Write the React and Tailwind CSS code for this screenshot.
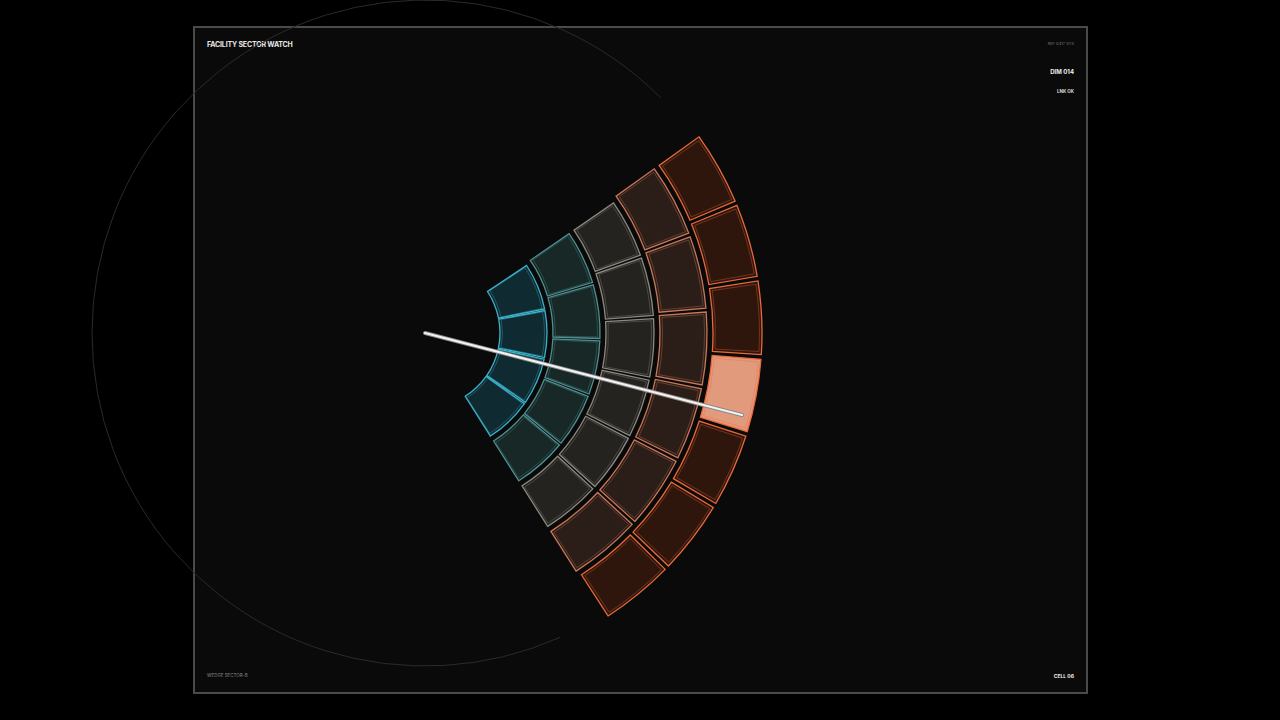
import React from "react";

const CX = 425, CY = 333;
const rings = [
  { r0: 75, r1: 122, n: 4, a0: -34, a1: 58, stroke: "#3cb4cc", fill: "#0f2a30" },
  { r0: 128, r1: 175, n: 5, a0: -35, a1: 58, stroke: "#4f8f92", fill: "#172826" },
  { r0: 181, r1: 229, n: 6, a0: -35, a1: 58, stroke: "#8c8a80", fill: "#24231f" },
  { r0: 235, r1: 282, n: 6, a0: -36, a1: 58, stroke: "#c9785a", fill: "#2b1d17" },
  { r0: 288, r1: 337, n: 7, a0: -36, a1: 57.5, stroke: "#e8693a", fill: "#2f160d" },
];
const rad = (d) => (d * Math.PI) / 180;
const pt = (r, a) => [CX + r * Math.cos(rad(a)), CY + r * Math.sin(rad(a))];
function sector(r0, r1, a0, a1) {
  const [x1, y1] = pt(r1, a0), [x2, y2] = pt(r1, a1), [x3, y3] = pt(r0, a1), [x4, y4] = pt(r0, a0);
  return `M${x1} ${y1} A${r1} ${r1} 0 0 1 ${x2} ${y2} L${x3} ${y3} A${r0} ${r0} 0 0 0 ${x4} ${y4} Z`;
}

export default function App() {
  const [ax, ay] = pt(333, -45), [bx, by] = pt(333, 66);
  return (
    <div className="relative w-[1280px] h-[720px] bg-black overflow-hidden" style={{ fontFamily: "Inter, 'Liberation Sans', sans-serif" }}>
      <div className="absolute left-[193px] top-[26px] w-[895px] h-[668px] border-2 border-[#4a4a4a] bg-[#0b0a0a] flex flex-col justify-between px-3 pt-3 pb-[12px]">
        <div className="flex justify-between items-start">
          <div className="text-[7px] font-bold text-[#e8e8e8] tracking-tight">FACILITY SECTOR WATCH</div>
          <div className="flex flex-col items-end">
            <div className="text-[4px] text-[#777] mt-[1px]">REF 0417 SYS</div>
            <div className="text-[6px] font-bold text-[#eee] mt-[20px]">DIM 014</div>
            <div className="text-[4.5px] font-bold text-[#ddd] mt-[13px]">LNK OK</div>
          </div>
        </div>
        <div className="flex justify-between items-end">
          <div className="text-[4.5px] text-[#888]">WEDGE SECTOR-B</div>
          <div className="text-[5px] font-bold text-[#eee]">CELL 06</div>
        </div>
      </div>
      <svg className="absolute inset-0" width="1280" height="720">
        <path d={`M${ax} ${ay} A333 333 0 1 0 ${bx} ${by}`} fill="none" stroke="#2a2a2a" strokeWidth="1" />
        {rings.map((g, i) => {
          const step = (g.a1 - g.a0) / g.n;
          return Array.from({ length: g.n }).map((_, j) => {
            const hi = i === 4 && j === 3;
            const s = g.a0 + j * step + 0.4, e = g.a0 + (j + 1) * step - 0.4;
            return (
              <g key={`${i}-${j}`}>
                <path d={sector(g.r0, g.r1, s, e)} fill={hi ? "#e29a7d" : g.fill} stroke={g.stroke} strokeWidth="1.3" />
                <path d={sector(g.r0 + 2.5, g.r1 - 2.5, s + 0.5, e - 0.5)} fill="none" stroke={g.stroke} strokeOpacity="0.45" strokeWidth="0.8" />
              </g>
            );
          });
        })}
        <line x1="425" y1="333" x2="742" y2="415" stroke="#888" strokeWidth="4" strokeLinecap="round" />
        <line x1="425" y1="333" x2="742" y2="415" stroke="#f2f2f2" strokeWidth="2.2" strokeLinecap="round" />
      </svg>
    </div>
  );
}
